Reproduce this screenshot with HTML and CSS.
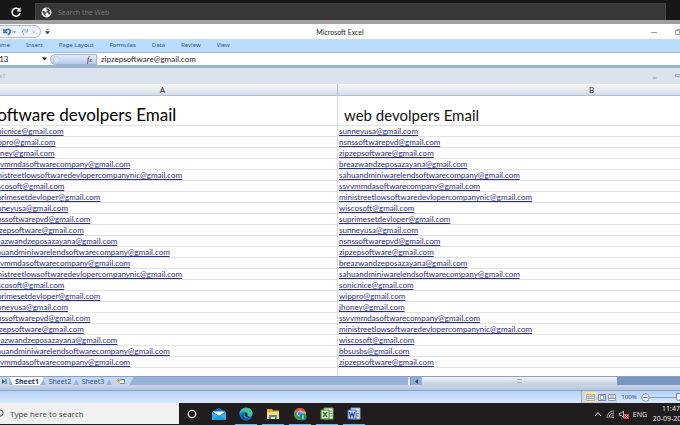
FILE: index.html
```html
<!DOCTYPE html>
<html lang="en">
<head>
  <meta charset="UTF-8" />
  <meta name="viewport" content="width=device-width, initial-scale=1.0"/>
  <title>Microsoft Excel</title>
  <link rel="stylesheet" href="styles.css">
</head>
<body>
  <!-- Browser bar -->
  <header class="browser">
    <button class="icon-btn reload" aria-label="Reload">
      <svg width="12" height="12" viewBox="0 0 12 12"><path d="M9.6 4.2A4 4 0 1 0 10 7.2" fill="none" stroke="#fff" stroke-width="1.5"/><path d="M10.6 1.2v4.2H6.4z" fill="#fff"/></svg>
    </button>
    <label class="search">
      <svg width="11" height="11" viewBox="0 0 12 12"><circle cx="6" cy="6" r="5.4" fill="#eee"/><path d="M1.8 4.2l2.4.6 1.4 1.6-.8 1.4.3 2.4-1.7-1.4-.5-1.8-1.5-1.2zM6 1.2l2.4.8 1.8 2-1 .5.9 2.3-1.4 1.3-1.3-1.8-1.6-.5.4-1.4 1.3-.6-1.7-1.2z" fill="#444"/></svg>
      <input type="text" placeholder="Search the Web" aria-label="Search the Web">
    </label>
  </header>

  <main class="excel">
    <!-- Title bar -->
    <div class="title-bar">
      <div class="tools">
        <div class="quick-access">
          <button class="icon-btn" aria-label="Undo">
            <svg width="13" height="8" viewBox="0 0 13 8"><path d="M1 1v3.500h3.500" fill="none" stroke="#3d5fae" stroke-width="1.400"/><path d="M1.500 4C3.500 0 8.500 1 7 4.500L5 7" fill="none" stroke="#4d70bd" stroke-width="1.800"/><path d="M10 3.200h3l-1.500 2z" fill="#7687a8"/></svg>
          </button>
          <button class="icon-btn" aria-label="Redo">
            <svg width="14" height="8" viewBox="0 0 14 8"><path d="M6.500 1v3h-3M6 3.500C4.500.500 1 1.500 1.500 4L3 7" fill="none" stroke="#9db2d6"/><path d="M11 3.200h3l-1.500 2z" fill="#b4c0d6"/></svg>
          </button>
        </div>
        <button class="icon-btn" aria-label="Customize toolbar">
          <svg width="5" height="6" viewBox="0 0 5 6"><path d="M1 .5h3M.5 2.500h4L2.500 5z" fill="#444" stroke="#444" stroke-width=".6"/></svg>
        </button>
      </div>
      <h1>Microsoft Excel</h1>
      <div class="window-controls">
        <button class="icon-btn" aria-label="Minimize"><svg width="6" height="6" viewBox="0 0 6 6"><path d="M0 3.500h6" stroke="#999"/></svg></button>
        <button class="icon-btn" aria-label="Restore"><svg width="6" height="6" viewBox="0 0 6 6"><path d="M.5 1.500h4v4h-4zM1.500.500h4v4" fill="none" stroke="#888" stroke-width=".8"/></svg></button>
      </div>
    </div>

    <nav class="ribbon">
      <button>Home</button>
      <button>Insert</button>
      <button>Page Layout</button>
      <button>Formulas</button>
      <button>Data</button>
      <button>Review</button>
      <button>View</button>
    </nav>

    <!-- Formula bar -->
    <div class="formula-bar">
      <span class="name-box">B13</span>
      <button class="icon-btn" aria-label="Name list"><svg width="5" height="4" viewBox="0 0 5 4"><path d="M0 .5h5L2.500 3.500z" fill="#111"/></svg></button>
      <div class="fx-box"><span class="dot"></span><i>f<small>x</small></i></div>
      <input class="formula" type="text" value="zipzepsoftware@gmail.com" aria-label="Formula">
    </div>

    <div class="book-bar">
      <span>Book1</span>
      <div class="window-controls">
        <button class="icon-btn" aria-label="Minimize workbook"><svg width="5" height="6" viewBox="0 0 5 6"><path d="M.5 5h4" stroke="#8791a0"/></svg></button>
        <button class="icon-btn" aria-label="Restore workbook"><svg width="6" height="6" viewBox="0 0 6 6"><path d="M.5 1.500h5v2h-5z" fill="none" stroke="#9ba5b5"/></svg></button>
      </div>
    </div>

    <div class="sheet">
      <table>
        <colgroup><col class="col-a"><col class="col-b"></colgroup>
        <thead><tr><th>A</th><th>B</th></tr></thead>
        <tbody id="rows">
          <tr class="heading"><td class="big">software devolpers Email</td><td>web devolpers Email</td></tr>
        </tbody>
      </table>
    </div>

    <!-- Sheet tabs and scroll bar -->
    <div class="sheet-bar">
      <button class="icon-btn last" aria-label="Last sheet"><svg width="5" height="5" viewBox="0 0 5 5"><path d="M0 0l3 2.500L0 5zM3.500 0h1v5h-1z" fill="#33558c"/></svg></button>
      <div class="tabs">
        <button class="tab active">Sheet1</button>
        <button class="tab">Sheet2</button>
        <button class="tab">Sheet3</button>
        <button class="tab new" aria-label="New sheet"><svg width="10" height="7" viewBox="0 0 10 7"><path d="M4 1.500h4.500v4H4" fill="#f7fbff" stroke="#5b7398" stroke-width=".8"/><path d="M2.500 0v5M0 2.500h5M1 1l3 3M4 1L1 4" stroke="#d69b45" stroke-width=".7"/></svg></button>
      </div>
      <div class="scroll">
        <span class="split"></span>
        <button class="icon-btn arrow" aria-label="Scroll left"><svg width="4" height="5" viewBox="0 0 4 5"><path d="M3 0v5L0 2.500z" fill="#28436d"/></svg></button>
        <div class="thumb"><span></span></div>
      </div>
    </div>
    <div class="frame"></div>

    <div class="status-bar">
      <div class="views">
        <button class="icon-btn selected" aria-label="Normal"><svg width="9" height="7" viewBox="0 0 9 7"><path d="M.5.500h8v6h-8zM.5 2.500h8M.5 4.500h8M3 .5v6M6 .5v6" fill="#fff" stroke="#8793a6" stroke-width=".7"/></svg></button>
        <button class="icon-btn" aria-label="Page layout"><svg width="8" height="7" viewBox="0 0 8 7"><path d="M.5.500h7v6h-7z" fill="#dce3ec" stroke="#77879f"/><path d="M2.500 1.500h3v4h-3z" fill="#fff" stroke="#77879f" stroke-width=".7"/></svg></button>
        <button class="icon-btn" aria-label="Page break"><svg width="8" height="7" viewBox="0 0 8 7"><path d="M.5.500h7v6h-7zM3 .5v4M5 .5v4M.5 4.500h7" fill="#f3f6fa" stroke="#77879f" stroke-width=".8"/></svg></button>
      </div>
      <span class="zoom">100%</span>
      <button class="icon-btn" aria-label="Zoom out"><svg width="9" height="9" viewBox="0 0 9 9"><circle cx="4.500" cy="4.500" r="3.800" fill="#eef4fc" stroke="#7385a4" stroke-width=".8"/><path d="M2.500 4.500h4" stroke="#50617f"/></svg></button>
      <input class="zoom-slider" type="range" value="50" aria-label="Zoom">
    </div>
  </main>

  <!-- Windows taskbar -->
  <footer class="taskbar">
    <label class="task-search">
      <svg width="8" height="10" viewBox="0 0 8 10"><circle cx="4" cy="4" r="3.200" fill="none" stroke="#444"/></svg>
      <input type="text" placeholder="Type here to search" aria-label="Type here to search">
    </label>
    <div class="apps">
      <button class="app" aria-label="Cortana"><svg width="14" height="14" viewBox="0 0 14 14"><circle cx="7" cy="7" r="3.700" fill="none" stroke="#eee" stroke-width="1.300"/></svg></button>
      <button class="app" aria-label="Mail"><svg width="14" height="14" viewBox="0 0 14 14"><path d="M0 5l7-4 7 4v8H0z" fill="#1673b8"/><path d="M1.500 5h11L7 9z" fill="#f4fbff"/><path d="M0 5l7 4.500L14 5v8H0z" fill="#36b0eb"/><path d="M1 4.500h12L7 8.500z" fill="#f4fbff"/><path d="M0 13l7-5 7 5z" fill="#209bdc"/></svg></button>
      <button class="app open" aria-label="Edge"><svg width="14" height="14" viewBox="0 0 14 14"><circle cx="7" cy="7" r="6.500" fill="#1686d4"/><path d="M.6 6.500C1-.5 13-1.500 13.500 6.500c0 3-4 3.500-5.300 2 2-3.500-4-6-7.600-2z" fill="#43c59a"/><path d="M5 6c-2 4 2 7 7 5-4 4.500-10 2-10-2C2 7 3.500 6 5 6z" fill="#135a9f"/><path d="M6 6c2-1 3 .8 2.200 2.500C8.500 10 11 10.500 12.500 9.500 10 12 5 10 6 6z" fill="#201e1e"/></svg></button>
      <button class="app open" aria-label="File Explorer"><svg width="14" height="14" viewBox="0 0 14 14"><path d="M1 2h5l1 1.500h6V12H1z" fill="#e7aa36"/><path d="M1 5h12v7H1z" fill="#ffdb79"/><path d="M3 8h8v4H9v-2H5v2H3z" fill="#408cb9"/></svg></button>
      <button class="app open" aria-label="Chrome"><svg width="14" height="14" viewBox="0 0 14 14"><circle cx="7" cy="7" r="6" fill="#e3b83d"/><path d="M1.800 4A6 6 0 0 1 12.500 4.500H7L5 8z" fill="#dd4f43"/><path d="M1.800 4L5 9l3 .5L7 13A6 6 0 0 1 1.800 4z" fill="#2f9d5a"/><circle cx="7" cy="6.500" r="2.600" fill="#4b8bec" stroke="#fff" stroke-width=".7"/><circle cx="10" cy="10" r="3.600" fill="#168e82"/><path d="M10 8v4" stroke="#d7f2ec"/></svg></button>
      <button class="app open" aria-label="Excel"><svg width="14" height="14" viewBox="0 0 14 14"><path d="M4 1h9v11H4z" fill="#eaf4df" stroke="#719d56"/><path d="M8 4h4M8 6.500h4M8 9h4" stroke="#75a65a"/><path d="M1 3h8v9H1z" fill="#d7ebcc" stroke="#4f893c"/><path d="M3 5l4 5M7 5l-4 5" stroke="#2e7628" stroke-width="1.500"/></svg></button>
      <button class="app open" aria-label="Word"><svg width="14" height="14" viewBox="0 0 14 14"><path d="M4 1h9v11H4z" fill="#edf3ff" stroke="#7e99cb"/><path d="M9 4h3M9 6.500h3M9 9h3" stroke="#6788c4"/><path d="M1 3h8v9H1z" fill="#d4e0f7" stroke="#486bae"/><path d="M2.500 5l1 5L5 6l1.500 4 1-5" fill="none" stroke="#234a9c" stroke-width="1.200"/></svg></button>
    </div>
    <div class="tray">
      <svg width="8" height="8" viewBox="0 0 8 8"><path d="M1 6l3-3.500L7 6" fill="none" stroke="#e4e4e4"/></svg>
      <svg width="9" height="9" viewBox="0 0 9 9"><path d="M1 8C1 4 4 1 8 1M3 8c0-3 2-5 5-5M5 8c0-2 1-3 3-3" fill="none" stroke="#c8c8c8" stroke-width=".9"/><circle cx="7.300" cy="7.300" r=".9" fill="#eee"/></svg>
      <svg width="10" height="9" viewBox="0 0 10 9"><path d="M.5 3h2L4.500 1v6.500l-2-2h-2z" fill="none" stroke="#ddd" stroke-width=".8"/><rect x="5" y="4" width="5" height="5" fill="#d93c3c"/><path d="M6.300 5.300l2.400 2.400M8.700 5.300L6.300 7.700" stroke="#fff" stroke-width=".8"/></svg>
      <span>ENG</span>
    </div>
    <div class="clock"><span>11:47</span><span>20-09-2022</span></div>
  </footer>

  <script src="script.js"></script>
</body>
</html>
```

FILE: styles.css
```css
* {
  box-sizing: border-box;
}

body {
  margin: 0;
  height: 100vh;
  display: flex;
  flex-direction: column;
  overflow: hidden;
  font-family: "Noto Sans", sans-serif;
  font-size: 6px;
  background: #171717;
}

button, input {
  font: inherit;
  color: inherit;
  border: none;
  padding: 0;
  margin: 0;
  background: none;
}

input {
  outline: none;
  min-width: 0;
}

svg {
  display: block;
  flex: none;
}

.icon-btn {
  display: flex;
  align-items: center;
  justify-content: center;
}

/* Browser bar */
.browser {
  height: 24px;
  display: flex;
  padding: 3px 14px 0 10px;
  border-bottom: 4px solid #a19fa0;
}

.reload {
  width: 12px;
  margin-right: 13px;
}

.search {
  flex: 1;
  display: flex;
  align-items: center;
  gap: 6px;
  padding-left: 5px;
  background: #373737;
  border: 1px solid #444;
  border-bottom: none;
}

.search input {
  flex: 1;
  font-size: 7px;
}

.search input::placeholder {
  color: #747474;
  opacity: 1;
}

/* Title bar */
.excel {
  flex: 1;
  min-height: 0;
  display: flex;
  flex-direction: column;
  background: #fff;
}

.title-bar {
  height: 15px;
  display: grid;
  grid-template-columns: 1fr auto 1fr;
  align-items: center;
}

.tools {
  display: flex;
  align-items: center;
  gap: 4px;
}

.quick-access {
  display: flex;
  align-items: center;
  gap: 5px;
  height: 13px;
  width: 41px;
  padding-left: 3px;
  border: 1px solid #b3bccb;
  border-left: none;
  border-radius: 0 7px 7px 0;
  background: #eff4fb;
}

.title-bar h1 {
  margin: 0;
  font-family: Lato, sans-serif;
  font-size: 7px;
  font-weight: normal;
  color: #222;
}

.window-controls {
  display: flex;
  justify-content: flex-end;
  gap: 18px;
  margin-left: auto;
  margin-right: -1px;
}

.ribbon {
  height: 14px;
  display: flex;
  align-items: center;
  gap: 16px;
  padding-bottom: 1px;
  background: #bbdbff;
  border-bottom: 1px solid #9db7d2;
  color: #365782;
}

.ribbon button:first-child {
  margin-left: -7px;
}

/* Formula bar */
.formula-bar {
  height: 15px;
  display: flex;
  align-items: center;
  border-bottom: 3px solid #9bb5ce;
  font-family: Lato, sans-serif;
  font-size: 8px;
  color: #222;
}

.name-box {
  width: 48px;
  margin-left: -6px;
}

.fx-box {
  width: 47px;
  height: 11px;
  display: flex;
  align-items: center;
  justify-content: space-between;
  margin-left: 3px;
  padding: 0 4px 0 2px;
  border: 1px solid #9fb2ce;
  border-radius: 6px 0 0 6px;
  background: linear-gradient(#e3ecf9, #b5cae8);
  font-family: "Liberation Serif", serif;
  font-size: 8px;
}

.fx-box small {
  font-size: 6px;
}

.dot {
  width: 7px;
  height: 7px;
  border-radius: 50%;
  background: #dce5f3;
  border: 1px solid #c1cde0;
}

.formula {
  flex: 1;
  padding-left: 4px;
}

.book-bar {
  height: 16px;
  display: flex;
  align-items: center;
  background: #dce3ee;
  color: #a5adb9;
}

.book-bar > span {
  margin-left: -12px;
}

/* Cells */
.sheet {
  flex: 1;
  min-height: 0;
  overflow: hidden;
}

table {
  width: 858px;
  margin-left: -12px;
  table-layout: fixed;
  border-collapse: separate;
  border-spacing: 0;
}

.col-a {
  width: 350px;
}

th {
  height: 12px;
  padding: 0;
  font-family: Lato, sans-serif;
  font-weight: normal;
  font-size: 8px;
  line-height: 10px;
  color: #333;
  background: linear-gradient(#f6f9fd, #d5dce8);
  border-right: 1px solid #b4bfce;
  border-bottom: 1px solid #b4bfce;
}

td {
  height: 11px;
  padding: 0 1px;
  font-family: Lato, sans-serif;
  font-size: 8px;
  line-height: 10px;
  white-space: nowrap;
  border-right: 1px solid #d4d9e2;
  border-bottom: 1px solid #dde1e8;
}

td a {
  color: #2c2c80;
}

.heading td {
  height: 30px;
  padding: 8px 6px 0;
  font-size: 15px;
  line-height: 20px;
  color: #111;
}

.heading .big {
  padding-left: 2px;
  font-size: 17px;
  color: #000;
}

.blank td {
  height: 8px;
  border-bottom: none;
}

/* Sheet tabs */
.sheet-bar {
  height: 9px;
  display: flex;
  background: #97b2d9;
  border-top: 1px solid #87a1c6;
  font-size: 7px;
  color: #304f83;
}

.last {
  width: 9px;
  background: #c4d8f2;
}

.tabs {
  display: flex;
  flex: 1;
}

.tab {
  display: flex;
  align-items: center;
  justify-content: center;
  width: 36px;
  margin-right: -3px;
  background: #c2d7f2;
  clip-path: polygon(0 0, 100% 0, calc(100% - 5px) 100%, 4px 100%);
}

.tab.active {
  background: #fff;
  font-weight: bold;
  color: #1d3157;
}

.tab.new {
  width: 26px;
}

.scroll {
  width: 40%;
  display: flex;
  background: #7796c2;
}

.split {
  width: 3px;
  background: #e9f0f9;
  border-right: 1px solid #7c93b6;
}

.arrow {
  width: 11px;
  background: #8fadd6;
}

.thumb {
  width: 195px;
  display: flex;
  align-items: center;
  justify-content: center;
  background: linear-gradient(#f2f5fa, #c2ccdc);
}

.thumb span {
  width: 5px;
  height: 4px;
  border: 1px solid #a5aebd;
  border-width: 1px 0;
}

.frame {
  height: 6px;
  background: linear-gradient(#c9d5e8, #b6c6df);
  border-bottom: 1px solid #89a4c8;
}

.status-bar {
  height: 12px;
  display: flex;
  align-items: center;
  justify-content: flex-end;
  background: linear-gradient(#b5d2f8, #d8e8fc);
  color: #26467c;
}

.views {
  display: flex;
  align-items: center;
  gap: 2px;
  height: 12px;
  padding: 0 1px 0 3px;
  background: #c9d8ec;
  border-left: 1px solid #8ea8cc;
}

.selected {
  height: 10px;
  padding: 0 1px;
  background: #ffe29b;
}

.zoom {
  width: 24px;
  text-align: center;
}

.zoom-slider {
  appearance: none;
  width: 56px;
  height: 9px;
  margin-right: -26px;
  background: linear-gradient(#839dc2, #839dc2) center / 100% 1px no-repeat;
}

.zoom-slider::-webkit-slider-thumb {
  appearance: none;
  width: 5px;
  height: 8px;
  background: #eef4fc;
  border: 1px solid #7385a4;
  border-radius: 0 0 3px 3px;
}

/* Taskbar */
.taskbar {
  height: 22px;
  display: flex;
  background: #211d1e;
  color: #eee;
}

.task-search {
  width: 179px;
  display: flex;
  align-items: center;
  gap: 6px;
  margin-bottom: 1px;
  background: #f0f0f0;
}

.task-search svg {
  margin-left: -4px;
}

.task-search input {
  flex: 1;
  font-family: "Open Sans", sans-serif;
  font-size: 8px;
}

.task-search input::placeholder {
  color: #444;
  opacity: 1;
}

.apps {
  display: flex;
  gap: 5px;
  flex: 1;
  padding-left: 2px;
}

.app {
  width: 22px;
  display: flex;
  align-items: center;
  justify-content: center;
  border-bottom: 1px solid transparent;
}

.app.open {
  border-bottom-color: #76b4e0;
}

.tray {
  display: flex;
  align-items: center;
  gap: 4px;
  font-family: "Open Sans", sans-serif;
  font-size: 7px;
}

.clock {
  width: 40px;
  display: flex;
  flex-direction: column;
  align-items: center;
  justify-content: center;
  margin-left: 4px;
  margin-right: -11px;
  font-family: "Open Sans", sans-serif;
  font-size: 7px;
  line-height: 10px;
}
```

FILE: script.js
```js
const developers = [
  ['sonicnice', 'sunneyusa'],
  ['wippro', 'nsnssoftwarepvd'],
  ['jhoney', 'zipzepsoftware'],
  ['ssvvmmdasoftwarecompany', 'breazwandzeposazayana'],
  ['ministreetlowsoftwaredevlopercompanynic', 'sahuandminiwarelendsoftwarecompany'],
  ['wiscosoft', 'ssvvmmdasoftwarecompany'],
  ['suprimesetdevloper', 'ministreetlowsoftwaredevlopercompanynic'],
  ['sunneyusa', 'wiscosoft'],
  ['nsnssoftwarepvd', 'suprimesetdevloper'],
  ['zipzepsoftware', 'sunneyusa'],
  ['breazwandzeposazayana', 'nsnssoftwarepvd'],
  ['sahuandminiwarelendsoftwarecompany', 'zipzepsoftware'],
  ['ssvvmmdasoftwarecompany', 'breazwandzeposazayana'],
  ['ministreetlowsoftwaredevlopercompanynic', 'sahuandminiwarelendsoftwarecompany'],
  ['wiscosoft', 'sonicnice'],
  ['suprimesetdevloper', 'wippro'],
  ['sunneyusa', 'jhoney'],
  ['nsnssoftwarepvd', 'ssvvmmdasoftwarecompany'],
  ['zipzepsoftware', 'ministreetlowsoftwaredevlopercompanynic'],
  ['breazwandzeposazayana', 'wiscosoft'],
  ['sahuandminiwarelendsoftwarecompany', 'bbsusbs'],
  ['ssvvmmdasoftwarecompany', 'zipzepsoftware']
];

const rows = document.getElementById('rows');

developers.forEach(pair => {
  const tr = document.createElement('tr');
  pair.forEach(name => {
    const td = document.createElement('td');
    const link = document.createElement('a');
    link.href = 'mailto:' + name + '@gmail.com';
    link.textContent = name + '@gmail.com';
    td.appendChild(link);
    tr.appendChild(td);
  });
  rows.appendChild(tr);
});

// empty row under the list
const last = document.createElement('tr');
last.className = 'blank';
last.innerHTML = '<td></td><td></td>';
rows.appendChild(last);
```
